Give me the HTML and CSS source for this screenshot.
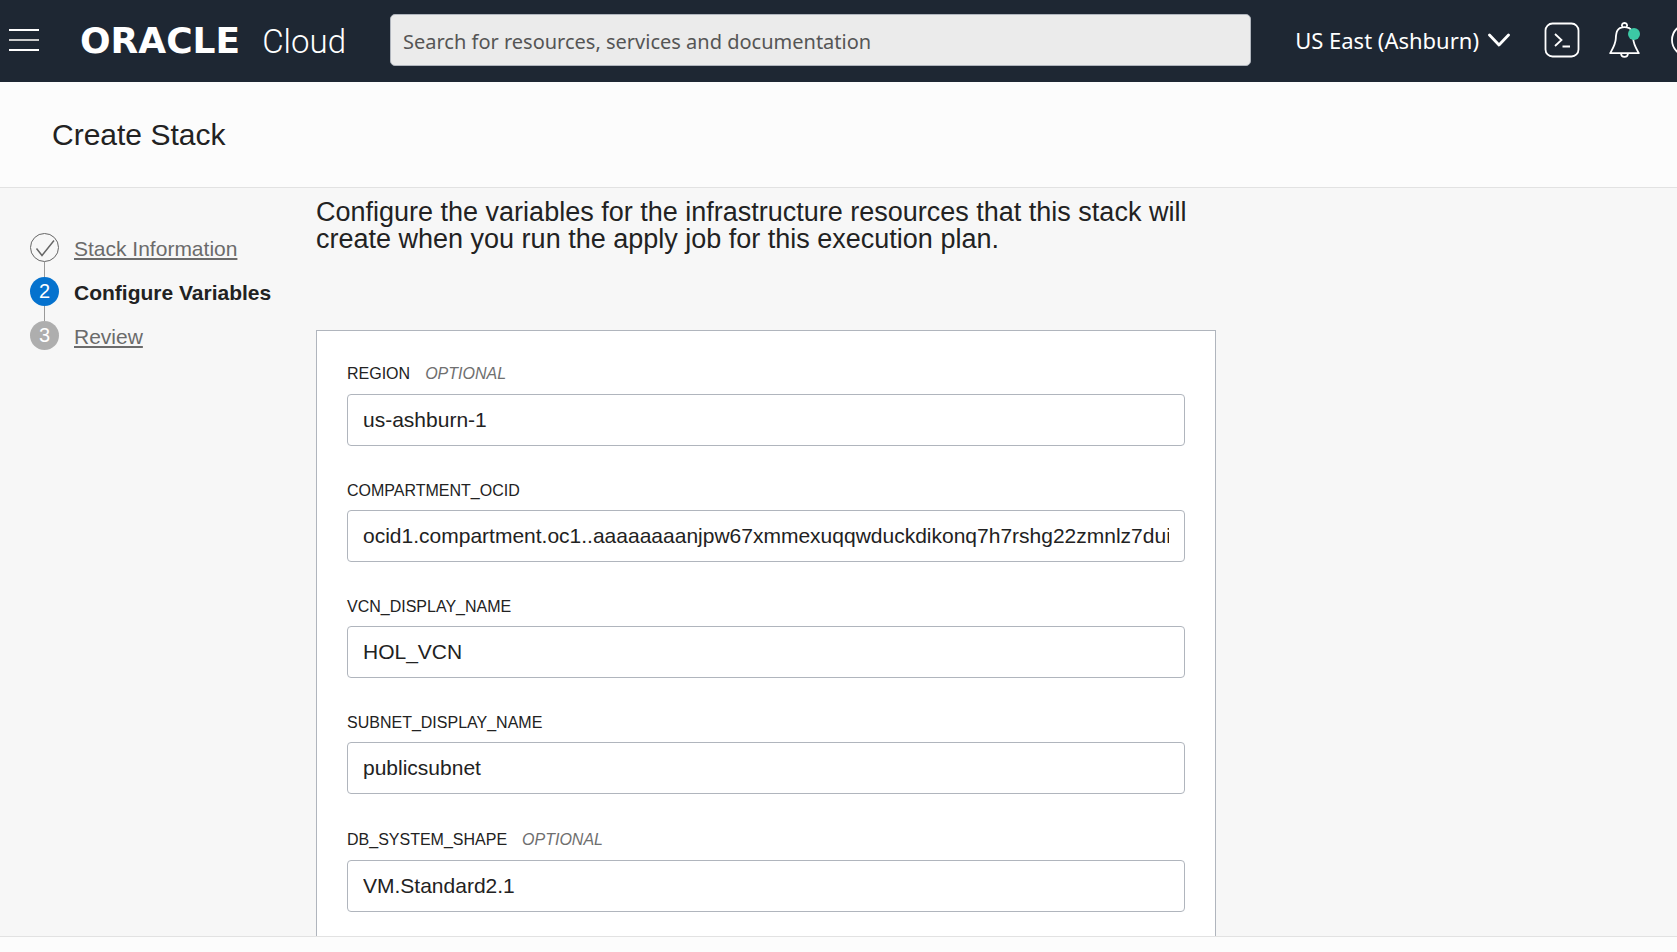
FILE: index.html
```html
<!DOCTYPE html>
<html lang="en">
<head>
<meta charset="utf-8">
<title>Create Stack</title>
<link rel="stylesheet" href="styles.css">
</head>
<body>
<header class="topbar">
  <button class="icon-button menu" aria-label="Menu">
    <svg width="30" height="24" viewBox="0 0 30 24" fill="none" stroke-width="2"><path d="M0 2h30M0 22h30" stroke="#fff"/><path d="M0 12h30" stroke="#ccc"/></svg>
  </button>
  <a class="brand" href="#"><span class="brand-name">ORACLE</span><span class="brand-product">Cloud</span></a>
  <input class="search" type="search" aria-label="Search" placeholder="Search for resources, services and documentation">
  <button class="icon-button region">US East (Ashburn)
    <svg width="22" height="14" viewBox="0 0 22 14" fill="none" stroke="#fff" stroke-width="2.8" stroke-linecap="round" stroke-linejoin="round"><path d="M1.5 2 11 12 20.5 2"/></svg>
  </button>
  <button class="icon-button shell" aria-label="Cloud Shell">
    <svg width="36" height="36" viewBox="0 0 36 36" fill="none" stroke="#fff" stroke-width="1.8"><rect x="1.5" y="1.5" width="33" height="33" rx="7"/><path d="m11 12 6.500 6-6.500 6M18.500 24.500h7.500"/></svg>
  </button>
  <button class="icon-button bell" aria-label="Announcements">
    <svg width="32" height="36" viewBox="0 0 32 36" fill="none" stroke="#fff" stroke-width="1.8" stroke-linejoin="round"><path d="M13.500 5.300C12 2.500 13.500 1 15.500 1s3.500 1.500 2 4.300M1.200 31.200c3-5.500 5.300-9 5.600-14.500C7 9.500 8.500 5.200 15.500 5.200s8.500 4.300 8.700 11.500c.3 5.500 2.600 9 5.600 14.500zM12 31.500c.3 4.500 6.700 4.500 7 0"/><circle cx="25" cy="12" r="6" fill="#3cc8a5" stroke="none"/></svg>
  </button>
  <button class="icon-button help" aria-label="Help">
    <svg width="34" height="34" viewBox="0 0 34 34" fill="none" stroke="#fff" stroke-width="1.8"><circle cx="17" cy="17" r="16"/></svg>
  </button>
</header>
<div class="titlebar"><h1>Create Stack</h1></div>
<div class="content">
  <nav class="steps" aria-label="Steps">
    <ol>
      <li><span class="marker done"><svg width="29" height="29" viewBox="0 0 29 29" fill="none" stroke="#666"><circle cx="14.5" cy="14.5" r="14"/><path d="m6.500 15.500 5.500 7L24 7.500" stroke-width="1.5"/></svg></span><a href="#">Stack Information</a></li>
      <li><span class="marker current">2</span><strong>Configure Variables</strong></li>
      <li><span class="marker pending">3</span><a href="#">Review</a></li>
    </ol>
  </nav>
  <main>
    <h2>Configure the variables for the infrastructure resources that this stack will create when you run the apply job for this execution plan.</h2>
    <form class="card">
      <div class="field">
        <div class="label-row"><label for="region">REGION</label><em>OPTIONAL</em></div>
        <input id="region" type="text" value="us-ashburn-1">
      </div>
      <div class="field">
        <div class="label-row"><label for="compartment">COMPARTMENT_OCID</label></div>
        <input id="compartment" type="text" value="ocid1.compartment.oc1..aaaaaaaanjpw67xmmexuqqwduckdikonq7h7rshg22zmnlz7dui">
      </div>
      <div class="field">
        <div class="label-row"><label for="vcn">VCN_DISPLAY_NAME</label></div>
        <input id="vcn" type="text" value="HOL_VCN">
      </div>
      <div class="field">
        <div class="label-row"><label for="subnet">SUBNET_DISPLAY_NAME</label></div>
        <input id="subnet" type="text" value="publicsubnet">
      </div>
      <div class="field">
        <div class="label-row"><label for="shape">DB_SYSTEM_SHAPE</label><em>OPTIONAL</em></div>
        <input id="shape" type="text" value="VM.Standard2.1">
      </div>
    </form>
  </main>
</div>
<footer class="footer"></footer>
</body>
</html>
```

FILE: styles.css
```css
* { box-sizing: border-box; }

body {
  margin: 0;
  height: 100vh;
  display: flex;
  flex-direction: column;
  overflow: hidden;
  background: #f7f7f7;
  color: #222;
  font-family: "Liberation Sans", Arial, sans-serif;
  font-size: 21px;
}

.topbar {
  flex: none;
  display: flex;
  align-items: center;
  height: 82px;
  padding: 0 0 2px 9px;
  background: #1e2733;
  color: #fff;
  overflow: hidden;
}

.icon-button {
  flex: none;
  display: flex;
  align-items: center;
  padding: 0;
  border: 0;
  background: none;
  color: inherit;
}

.icon-button svg { display: block; }

.brand {
  flex: none;
  display: flex;
  align-items: baseline;
  justify-content: space-between;
  width: 266px;
  margin: 0 44px 0 41px;
  padding-top: 2px;
  color: #fff;
  line-height: 40px;
  text-decoration: none;
}

.brand-name { font: bold 36px/40px "DejaVu Sans", sans-serif; }
.brand-product { font: 300 33px/40px Roboto, sans-serif; }

.search {
  flex: 1;
  min-width: 0;
  height: 52px;
  padding: 2px 12px 0;
  border: 1px solid #b0b5bd;
  border-radius: 5px;
  background: #ebebeb;
  color: #555;
  font: 20px "Noto Sans", sans-serif;
}

.search::placeholder { color: #555; opacity: 1; }

.region {
  gap: 9px;
  margin-left: 44px;
  font: 22px "Noto Sans", sans-serif;
}

.shell { margin-left: 34px; }
.bell { margin-left: 29px; }
.help { margin: 0 -28px 0 30px; }

.titlebar {
  flex: none;
  display: flex;
  align-items: center;
  height: 106px;
  padding: 0 52px;
  border-bottom: 1px solid #e2e2e2;
  background: #fcfcfc;
}

h1 { margin: 0; font-size: 30px; font-weight: normal; }

.content {
  flex: 1;
  min-height: 0;
  display: flex;
  overflow: hidden;
}

.steps { flex: none; width: 316px; padding: 45px 0 0 30px; }

.steps ol {
  display: flex;
  flex-direction: column;
  gap: 15px;
  margin: 0;
  padding: 0;
  list-style: none;
}

.steps li { display: flex; align-items: center; gap: 15px; height: 29px; line-height: 29px; }
.steps a, .steps strong { padding-top: 2px; }
.steps a { color: #6b6b6b; }

.marker {
  position: relative;
  width: 29px;
  height: 29px;
  border-radius: 50%;
  color: #fff;
  font-size: 20px;
  text-align: center;
}

.marker svg { display: block; }
.current { background: #0572ce; }
.pending { background: #aeaeae; }

/* connector to the next step */
li:not(:last-child) .marker::after {
  content: "";
  position: absolute;
  top: 29px;
  left: 14px;
  width: 1px;
  height: 15px;
  background: #999;
}

main { flex: 1; max-width: 900px; padding-top: 11px; }

h2 { margin: 0 0 77px; font-size: 27px; line-height: 27px; font-weight: normal; }

.card {
  display: flex;
  flex-direction: column;
  gap: 35px;
  padding: 32px 30px;
  border: 1px solid #b0b5bd;
  background: #fff;
}

.label-row {
  display: flex;
  align-items: center;
  gap: 15px;
  margin-bottom: 9px;
  font-size: 16px;
  line-height: 20px;
}

.label-row em { color: #6f6f6f; line-height: 22px; }

.field input {
  display: block;
  width: 100%;
  height: 52px;
  padding: 0 15px;
  border: 1px solid #b0b5bd;
  border-radius: 4px;
  background: #fff;
  color: #222;
  font: inherit;
}

.footer {
  flex: none;
  height: 16px;
  border-top: 1px solid #e2e2e2;
  background: #fcfcfc;
}
```
